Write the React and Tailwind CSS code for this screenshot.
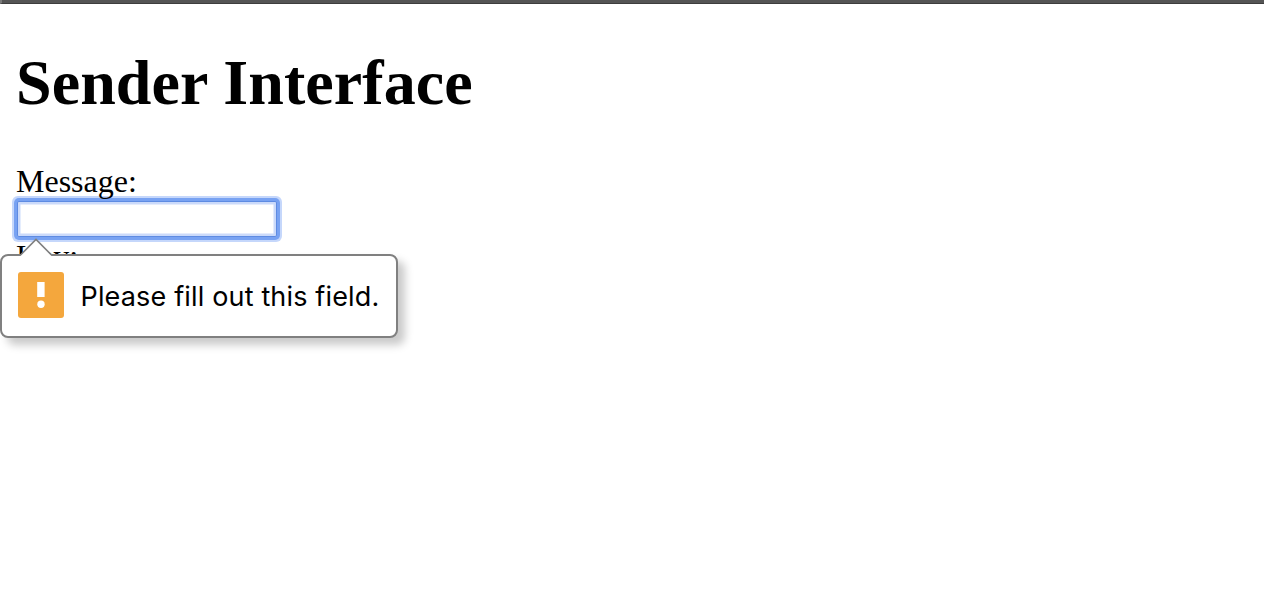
export default function App() {
  return (
    <div className="relative h-[594px] w-full overflow-hidden bg-white font-['Liberation_Serif',serif] text-black">
      <div className="h-1 border-b border-l-2 border-b-[#3d3d3d] border-l-[#7b7b7b] bg-[#555555]" />
      <main className="pl-4">
        <h1 className="pt-[42px] text-[64px] leading-[74px] font-bold tracking-[0.07px]">Sender Interface</h1>
        <form className="pt-[43px]" onSubmit={(e) => e.preventDefault()}>
          <label htmlFor="message" className="relative z-10 block h-[38px] text-[32px] leading-[37px]">
            Message:
          </label>
          <input
            id="message"
            className="ml-px block h-9 w-[260px] rounded-[2px] border border-[#5e8be2] bg-white px-1 font-sans text-[22px] shadow-[inset_0_0_0_2.5px_#cbdafa,0_0_0_3px_#78a2f2,0_0_0_5px_#c5d7fb] outline-none"
          />
          <label className="mt-px block h-[37px] text-[32px] leading-[37px]">Key:</label>
        </form>
      </main>

      <div
        role="alert"
        className="absolute top-[254px] left-0 z-20 flex h-[84px] w-[398px] items-center rounded-lg border-2 border-[#808080] bg-white pl-4 shadow-[7px_7px_8px_rgba(0,0,0,0.21)]"
      >
        <svg className="absolute -top-[18px] left-[16px]" width="36" height="20" viewBox="0 0 36 20">
          <path d="M2 20V18L18 2L34 18V20Z" fill="white" />
          <path d="M2 17.5L18 1.5L34 17.5" fill="none" stroke="#808080" strokeWidth="1.6" />
        </svg>
        <svg className="-mt-0.5" width="46" height="46" viewBox="0 0 46 46">
          <rect width="46" height="46" rx="3" fill="#f4a73d" />
          <rect x="19.2" y="10" width="7.4" height="15" fill="white" />
          <circle cx="23" cy="32.3" r="3.7" fill="white" />
        </svg>
        <span className="mt-0.5 ml-[16.5px] font-['Inter',sans-serif] text-[27px] tracking-[0.16px] whitespace-nowrap">
          Please fill out this field.
        </span>
      </div>
    </div>
  );
}
